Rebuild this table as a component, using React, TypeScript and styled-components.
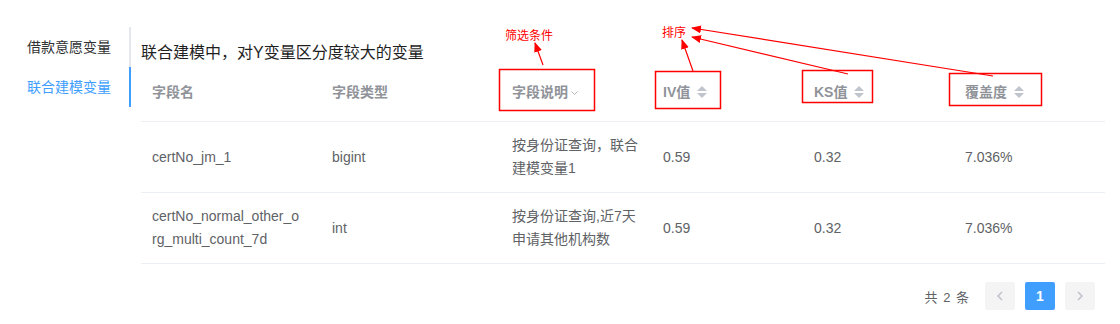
import React from 'react';
import styled, { createGlobalStyle } from 'styled-components';

const GlobalStyle = createGlobalStyle`
  body {
    margin: 0;
    background: #ffffff;
    font-family: "Liberation Sans", "Noto Sans CJK SC", sans-serif;
  }
`;

interface Column {
    key: string;
    title: string;
    width: number;
    sortable?: boolean;
    filter?: boolean;
}

interface Row {
    name: string;
    type: string;
    desc: string;
    iv: string;
    ks: string;
    cover: string;
}

const columns: Column[] = [
    { key: 'name', title: '字段名', width: 180 },
    { key: 'type', title: '字段类型', width: 180 },
    { key: 'desc', title: '字段说明', width: 151, filter: true },
    { key: 'iv', title: 'IV值', width: 151, sortable: true },
    { key: 'ks', title: 'KS值', width: 151, sortable: true },
    { key: 'cover', title: '覆盖度', width: 151, sortable: true },
];

const rows: Row[] = [
    { name: 'certNo_jm_1', type: 'bigint', desc: '按身份证查询，联合建模变量1', iv: '0.59', ks: '0.32', cover: '7.036%' },
    { name: 'certNo_normal_other_org_multi_count_7d', type: 'int', desc: '按身份证查询,近7天申请其他机构数', iv: '0.59', ks: '0.32', cover: '7.036%' },
];

const Page = styled.div`
  position: relative;
  display: flex;
  padding-top: 27px;
  width: 1120px;
  height: 324px;
  box-sizing: border-box;
`;

const Tabs = styled.div`
  width: 131px;
  flex-shrink: 0;
  align-self: flex-start;
`;

const Tab = styled.div<{ active?: boolean }>`
  height: 40px;
  line-height: 40px;
  padding-right: 18px;
  text-align: right;
  font-size: 14px;
  color: ${({ active }) => (active ? '#409eff' : '#303133')};
  border-right: 2px solid ${({ active }) => (active ? '#409eff' : '#e4e7ed')};
`;

const Content = styled.div`
  margin-left: 10px;
  width: 964px;
`;

const Title = styled.div`
  padding-top: 15px;
  height: 21px;
  line-height: 21px;
  font-size: 16px;
  color: #1f1f1f;
`;

const Table = styled.div`
  width: 964px;
`;

const TableRow = styled.div<{ head?: boolean }>`
  display: flex;
  height: ${({ head }) => (head ? '58px' : '70px')};
  border-bottom: 1px solid #ebeef5;
`;

const Cell = styled.div<{ w: number; head?: boolean; narrow?: boolean }>`
  width: ${({ w }) => w}px;
  flex-shrink: 0;
  box-sizing: border-box;
  padding: 0 ${({ narrow }) => (narrow ? '20px' : '10px')} 0 11px;
  display: flex;
  align-items: center;
  font-size: 14px;
  line-height: 23px;
  color: ${({ head }) => (head ? '#909399' : '#606266')};
  font-weight: ${({ head }) => (head ? 'bold' : 'normal')};
  word-break: break-all;
`;

const SortIcon = styled.span`
  display: inline-flex;
  flex-direction: column;
  gap: 2px;
  margin-left: 7px;
`;

const FilterArrow = styled.span`
  display: inline-flex;
  margin-left: 3px;
  margin-top: 2px;
`;

const Pager = styled.div`
  display: flex;
  justify-content: flex-end;
  align-items: center;
  margin-top: 18px;
  padding-right: 10px;
  gap: 10px;
  font-size: 13px;
  color: #606266;
`;

const Total = styled.span`
  margin-right: 5px;
  letter-spacing: 1px;
`;

const PageButton = styled.div<{ active?: boolean }>`
  width: 30px;
  height: 28px;
  border-radius: 2px;
  display: flex;
  align-items: center;
  justify-content: center;
  background: ${({ active }) => (active ? '#409eff' : '#f4f4f5')};
  color: ${({ active }) => (active ? '#ffffff' : '#c0c4cc')};
  font-weight: bold;
  font-size: 14px;
`;

const Overlay = styled.svg`
  position: absolute;
  left: 0;
  top: 0;
  pointer-events: none;
`;

const Note = styled.span<{ x: number; y: number }>`
  position: absolute;
  left: ${({ x }) => x}px;
  top: ${({ y }) => y}px;
  font-size: 12px;
  line-height: 14px;
  color: #ff0000;
  font-family: "Noto Sans CJK SC", sans-serif;
`;

const Caret = () => (
    <SortIcon>
        <svg width="10" height="5" viewBox="0 0 10 5"><path d="M0 5 L5 0 L10 5 Z" fill="#c0c4cc" /></svg>
        <svg width="10" height="5" viewBox="0 0 10 5"><path d="M0 0 L5 5 L10 0 Z" fill="#c0c4cc" /></svg>
    </SortIcon>
);

const Chevron = () => (
    <FilterArrow>
        <svg width="7" height="4" viewBox="0 0 7 4"><path d="M0.5 0.5 L3.5 3.5 L6.5 0.5" fill="none" stroke="#b4b7bd" strokeWidth="1" /></svg>
    </FilterArrow>
);

const Arrow = ({ x1, y1, x2, y2 }: { x1: number; y1: number; x2: number; y2: number }) => (
    <line x1={x1} y1={y1} x2={x2} y2={y2} stroke="#ff0000" strokeWidth="1.2" markerEnd="url(#head)" />
);

export default function App() {
    return (
        <>
            <GlobalStyle />
            <Page>
                <Tabs>
                    <Tab>借款意愿变量</Tab>
                    <Tab active>联合建模变量</Tab>
                </Tabs>
                <Content>
                    <Title>联合建模中，对Y变量区分度较大的变量</Title>
                    <Table>
                        <TableRow head>
                            {columns.map((c) => (
                                <Cell key={c.key} w={c.width} head>
                                    {c.title}
                                    {c.sortable && <Caret />}
                                    {c.filter && <Chevron />}
                                </Cell>
                            ))}
                        </TableRow>
                        {rows.map((r, i) => (
                            <TableRow key={i}>
                                {columns.map((c) => (
                                    <Cell key={c.key} w={c.width} narrow={c.key === 'name'}>
                                        {r[c.key as keyof Row]}
                                    </Cell>
                                ))}
                            </TableRow>
                        ))}
                    </Table>
                    <Pager>
                        <Total>共 2 条</Total>
                        <PageButton>
                            <svg width="8" height="10" viewBox="0 0 8 10"><path d="M6 1 L2 5 L6 9" fill="none" stroke="#c0c4cc" strokeWidth="1.6" /></svg>
                        </PageButton>
                        <PageButton active>1</PageButton>
                        <PageButton>
                            <svg width="8" height="10" viewBox="0 0 8 10"><path d="M2 1 L6 5 L2 9" fill="none" stroke="#c0c4cc" strokeWidth="1.6" /></svg>
                        </PageButton>
                    </Pager>
                </Content>

                {/* red review annotations drawn over the table */}
                <Overlay width="1120" height="324">
                    <defs>
                        <marker id="head" markerWidth="10" markerHeight="8" refX="9" refY="4" orient="auto" markerUnits="userSpaceOnUse">
                            <path d="M0 0 L10 4 L0 8 Z" fill="#ff0000" />
                        </marker>
                    </defs>
                    <g fill="none" stroke="#ff0000" strokeWidth="1.5">
                        <rect x="499.5" y="69.5" width="95" height="41" />
                        <rect x="655.5" y="71.5" width="65" height="37" />
                        <rect x="802.5" y="70.5" width="70" height="32" />
                        <rect x="949.5" y="73.5" width="92" height="32" />
                    </g>
                    <Arrow x1={543} y1={65} x2={535} y2={43} />
                    <Arrow x1={693} y1={71} x2={682} y2={40} />
                    <Arrow x1={848} y1={74} x2={692} y2={37} />
                    <Arrow x1={993} y1={76} x2={692} y2={28} />
                </Overlay>
                <Note x={505} y={28}>筛选条件</Note>
                <Note x={662} y={25}>排序</Note>
            </Page>
        </>
    );
}
